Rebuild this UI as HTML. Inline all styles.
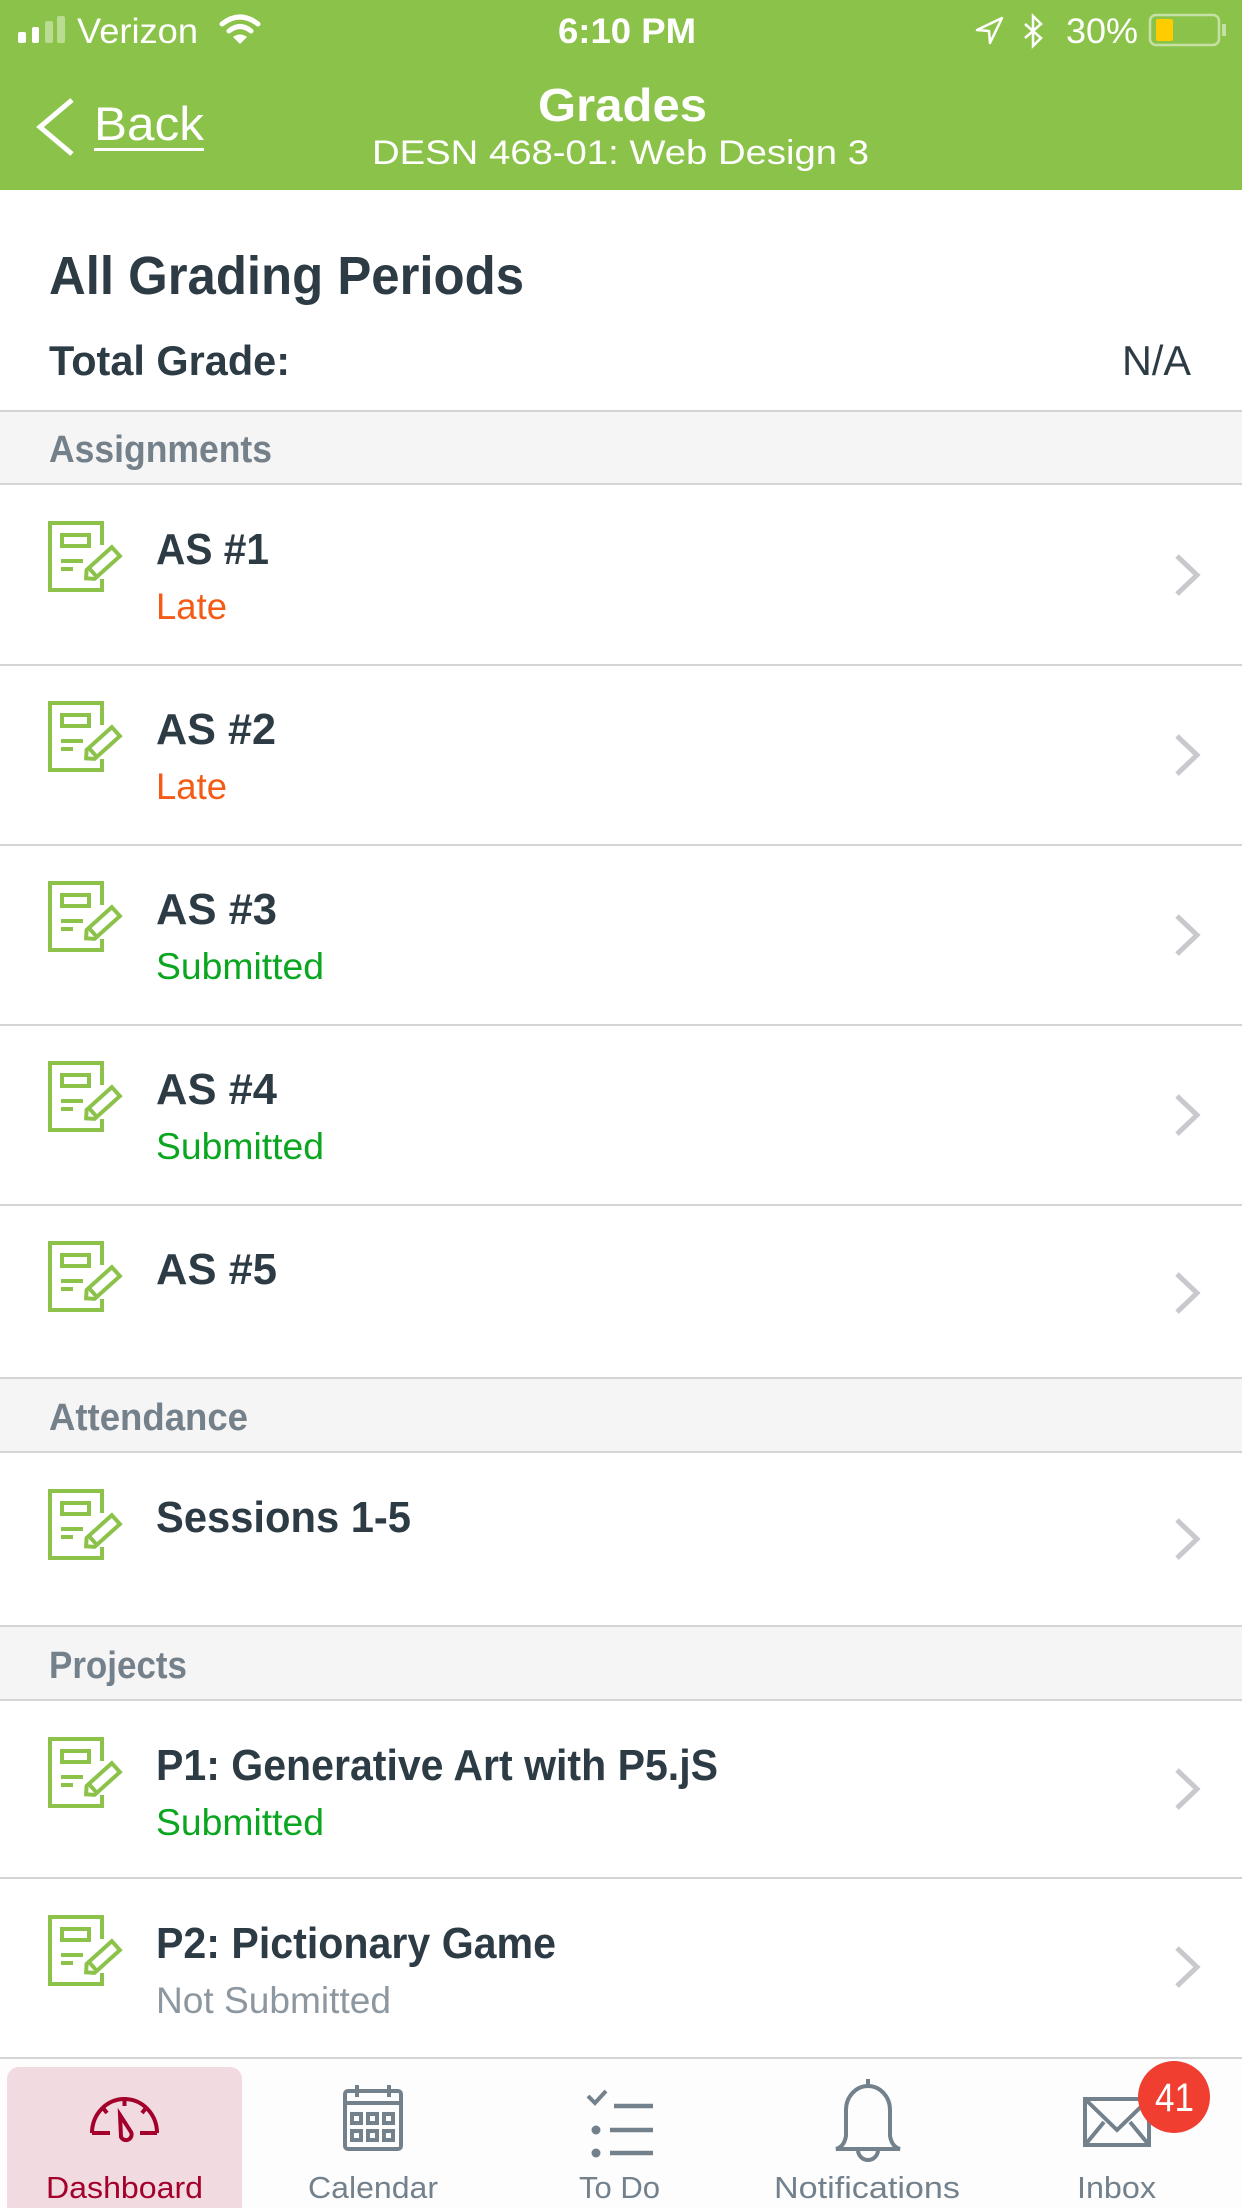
<!DOCTYPE html>
<html><head><meta charset="utf-8"><style>
html,body{margin:0;padding:0;background:#fff;}
svg{display:block;}
text{font-family:"Liberation Sans",Arial,sans-serif;}
</style></head><body>
<svg width="1242" height="2208" viewBox="0 0 1242 2208" xmlns="http://www.w3.org/2000/svg">
<defs>
<g id="ic" fill="none" stroke="#8cc24a" stroke-width="4">
  <path d="M54 24 V2 H2 V69 H54 V58"/>
  <rect x="14" y="14" width="27" height="11"/>
  <line x1="13" y1="40" x2="35" y2="40"/>
  <line x1="13" y1="48" x2="25" y2="48"/>
  <g transform="translate(53,44) rotate(-42)">
    <path d="M-20 -6 H14 L20 0 L14 6 H-20 Z" transform="scale(-1,1)"/>
    <line x1="-11" y1="-6" x2="-11" y2="6"/>
  </g>
</g>
<polyline id="ch" points="1177,556 1197,575 1177,594" fill="none" stroke="#c8c8cd" stroke-width="5"/>
</defs>

<rect x="0" y="0" width="1242" height="190" fill="#8bc34a"/>
<rect x="18" y="32" width="8" height="11" rx="2" fill="#fff"/>
<rect x="32" y="27" width="7" height="16" rx="2" fill="#fff"/>
<rect x="45" y="21" width="8" height="22" rx="2" fill="#fff" fill-opacity="0.4"/>
<rect x="57" y="16" width="8" height="27" rx="2" fill="#fff" fill-opacity="0.4"/>
<text x="77" y="43" font-size="35" fill="#fff" textLength="121" lengthAdjust="spacingAndGlyphs">Verizon</text>
<g fill="none" stroke="#fff" stroke-width="5" stroke-linecap="round">
  <path d="M222 24 Q240 10 258 24"/>
  <path d="M229 31 Q240 22 251 31"/>
</g>
<path d="M233 37 L240 44 L247 37 Q240 32 233 37Z" fill="#fff"/>
<text x="558" y="43" font-size="35" fill="#fff" font-weight="bold" textLength="138" lengthAdjust="spacingAndGlyphs">6:10 PM</text>
<path d="M977 30 L1002 18 L990 43 L989 31 Z" fill="none" stroke="#fff" stroke-width="2.5" stroke-linejoin="round"/>
<path d="M1025 24 L1041 38 L1033 46 V16 L1041 24 L1025 38" fill="none" stroke="#fff" stroke-width="2.5"/>
<text x="1066" y="43" font-size="35" fill="#fff" textLength="72" lengthAdjust="spacingAndGlyphs">30%</text>
<rect x="1150" y="15" width="69" height="30" rx="6" fill="none" stroke="#fff" stroke-opacity="0.5" stroke-width="2.5"/>
<rect x="1156" y="19" width="17" height="22" rx="2" fill="#ffcc00"/>
<rect x="1222" y="24" width="4" height="12" rx="1" fill="#fff" fill-opacity="0.5"/>

<polyline points="72,100 40,127 72,154" fill="none" stroke="#fff" stroke-width="5"/>
<text x="94" y="140" font-size="47" fill="#fff" textLength="110" lengthAdjust="spacingAndGlyphs">Back</text>
<rect x="94" y="148" width="110" height="3" fill="#fff"/>
<text x="538" y="121" font-size="46" font-weight="bold" fill="#fff" textLength="169" lengthAdjust="spacingAndGlyphs">Grades</text>
<text x="372" y="164" font-size="34" fill="#fff" textLength="497" lengthAdjust="spacingAndGlyphs">DESN 468-01:  Web Design 3</text>

<text x="49" y="294" font-size="54" font-weight="bold" fill="#2d3b45" textLength="475" lengthAdjust="spacingAndGlyphs">All Grading Periods</text>
<text x="49" y="375" font-size="42" font-weight="bold" fill="#2d3b45" textLength="241" lengthAdjust="spacingAndGlyphs">Total Grade:</text>
<text x="1122" y="375" font-size="42" fill="#2d3b45" textLength="69" lengthAdjust="spacingAndGlyphs">N/A</text>

<rect x="0" y="411" width="1242" height="73" fill="#f5f5f5"/>
<rect x="0" y="1378" width="1242" height="74" fill="#f5f5f5"/>
<rect x="0" y="1626" width="1242" height="74" fill="#f5f5f5"/>
<text x="49" y="462" font-size="38" font-weight="bold" fill="#74808a" textLength="223" lengthAdjust="spacingAndGlyphs">Assignments</text>
<text x="49" y="1430" font-size="38" font-weight="bold" fill="#74808a" textLength="199" lengthAdjust="spacingAndGlyphs">Attendance</text>
<text x="49" y="1678" font-size="38" font-weight="bold" fill="#74808a" textLength="138" lengthAdjust="spacingAndGlyphs">Projects</text>

<g fill="#d4d4d6">
<rect x="0" y="410" width="1242" height="2"/>
<rect x="0" y="483" width="1242" height="2"/>
<rect x="0" y="664" width="1242" height="2"/>
<rect x="0" y="844" width="1242" height="2"/>
<rect x="0" y="1024" width="1242" height="2"/>
<rect x="0" y="1204" width="1242" height="2"/>
<rect x="0" y="1377" width="1242" height="2"/>
<rect x="0" y="1451" width="1242" height="2"/>
<rect x="0" y="1625" width="1242" height="2"/>
<rect x="0" y="1699" width="1242" height="2"/>
<rect x="0" y="1877" width="1242" height="2"/>
<rect x="0" y="2057" width="1242" height="2"/>
</g>

<g font-size="44" font-weight="bold" fill="#2d3b45">
<text x="156" y="564" textLength="113" lengthAdjust="spacingAndGlyphs">AS #1</text>
<text x="156" y="744" textLength="120" lengthAdjust="spacingAndGlyphs">AS #2</text>
<text x="156" y="924" textLength="121" lengthAdjust="spacingAndGlyphs">AS #3</text>
<text x="156" y="1104" textLength="121" lengthAdjust="spacingAndGlyphs">AS #4</text>
<text x="156" y="1284" textLength="121" lengthAdjust="spacingAndGlyphs">AS #5</text>
<text x="156" y="1532" textLength="255" lengthAdjust="spacingAndGlyphs">Sessions 1-5</text>
<text x="156" y="1780" textLength="562" lengthAdjust="spacingAndGlyphs">P1: Generative Art with P5.jS</text>
<text x="156" y="1958" textLength="400" lengthAdjust="spacingAndGlyphs">P2: Pictionary Game</text>
</g>
<g font-size="37">
<text x="156" y="619" fill="#f25c16" textLength="71" lengthAdjust="spacingAndGlyphs">Late</text>
<text x="156" y="799" fill="#f25c16" textLength="71" lengthAdjust="spacingAndGlyphs">Late</text>
<text x="156" y="979" fill="#0aa620" textLength="168" lengthAdjust="spacingAndGlyphs">Submitted</text>
<text x="156" y="1159" fill="#0aa620" textLength="168" lengthAdjust="spacingAndGlyphs">Submitted</text>
<text x="156" y="1835" fill="#0aa620" textLength="168" lengthAdjust="spacingAndGlyphs">Submitted</text>
<text x="156" y="2013" fill="#8d979f" textLength="235" lengthAdjust="spacingAndGlyphs">Not Submitted</text>
</g>
<use href="#ic" transform="translate(48,521)"/>
<use href="#ic" transform="translate(48,701)"/>
<use href="#ic" transform="translate(48,881)"/>
<use href="#ic" transform="translate(48,1061)"/>
<use href="#ic" transform="translate(48,1241)"/>
<use href="#ic" transform="translate(48,1489)"/>
<use href="#ic" transform="translate(48,1737)"/>
<use href="#ic" transform="translate(48,1915)"/>
<use href="#ch"/>
<use href="#ch" transform="translate(0,180)"/>
<use href="#ch" transform="translate(0,360)"/>
<use href="#ch" transform="translate(0,540)"/>
<use href="#ch" transform="translate(0,718)"/>
<use href="#ch" transform="translate(0,964)"/>
<use href="#ch" transform="translate(0,1214)"/>
<use href="#ch" transform="translate(0,1392)"/>

<rect x="0" y="2059" width="1242" height="149" fill="#fdfdfd"/>
<rect x="7" y="2067" width="235" height="160" rx="12" fill="#f2dbe0"/>
<g fill="none" stroke="#a3002c" stroke-width="4">
  <path d="M92 2133 A32.5 34 0 0 1 157 2133"/>
  <path d="M92 2133 H110 M140 2133 H157"/>
  <path d="M124.5 2099 V2106 M103 2108 L107 2113 M146 2108 L142 2113"/>
  <path d="M120 2115 L131 2132 A5.5 5.5 0 0 1 121 2137 Z"/>
</g>
<g fill="none" stroke="#73818c" stroke-width="4">
  <rect x="345" y="2091" width="56" height="58" rx="3"/>
  <path d="M345 2103 H401 M357 2085 V2097 M389 2085 V2097"/>
  <rect x="352" y="2114" width="9" height="9"/>
  <rect x="368" y="2114" width="9" height="9"/>
  <rect x="384" y="2114" width="9" height="9"/>
  <rect x="352" y="2131" width="9" height="9"/>
  <rect x="368" y="2131" width="9" height="9"/>
  <rect x="384" y="2131" width="9" height="9"/>
  <path d="M588 2096 L595 2103 L606 2091"/>
  <path d="M614 2106 H653 M610 2130 H653 M610 2153 H653" stroke-width="4.5"/>
  <path d="M846 2136 V2110 A22 24 0 0 1 890 2110 V2136 Q892 2147 900 2149 H836 Q844 2147 846 2136 Z M868 2086 V2079 M858 2150 A10 10 0 0 0 878 2150"/>
  <rect x="1085" y="2099" width="64" height="46"/>
  <path d="M1085 2099 L1117 2130 L1149 2099 M1085 2145 L1104 2122 M1149 2145 L1130 2122"/>
</g>
<circle cx="596" cy="2130" r="4.5" fill="#73818c"/>
<circle cx="596" cy="2153" r="4.5" fill="#73818c"/>
<circle cx="1174" cy="2097" r="36" fill="#f03e31"/>
<text x="1155" y="2111" font-size="40" fill="#fff" textLength="39" lengthAdjust="spacingAndGlyphs">41</text>
<g font-size="31">
<text x="46" y="2198" fill="#a3002c" textLength="157" lengthAdjust="spacingAndGlyphs">Dashboard</text>
<text x="308" y="2198" fill="#73818c" textLength="130" lengthAdjust="spacingAndGlyphs">Calendar</text>
<text x="579" y="2198" fill="#73818c" textLength="81" lengthAdjust="spacingAndGlyphs">To Do</text>
<text x="774" y="2198" fill="#73818c" textLength="186" lengthAdjust="spacingAndGlyphs">Notifications</text>
<text x="1077" y="2198" fill="#73818c" textLength="79" lengthAdjust="spacingAndGlyphs">Inbox</text>
</g>
</svg>
</body></html>
